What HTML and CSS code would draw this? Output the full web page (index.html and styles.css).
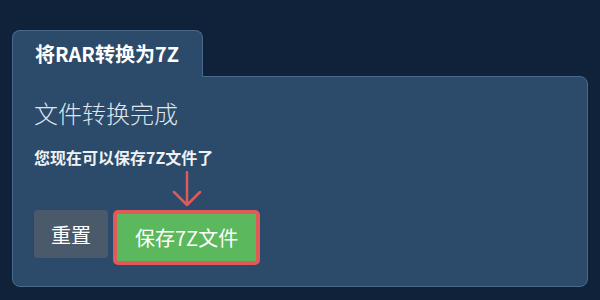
FILE: index.html
```html
<!DOCTYPE html>
<html lang="zh-CN">
<head>
  <meta charset="UTF-8" />
  <meta name="viewport" content="width=device-width, initial-scale=1.0"/>
  <title>将RAR转换为7Z</title>
  <link rel="stylesheet" href="styles.css">
</head>
<body>

  <div class="wrap">
    <!-- Tab header -->
    <div class="tab">将RAR转换为7Z</div>

    <!-- Panel body -->
    <div class="panel">
      <h2 class="title">文件转换完成</h2>
      <p class="note">您现在可以保存7Z文件了</p>

      <div class="buttons">
        <button class="btn btn-reset">重置</button>
        <button class="btn btn-save">
          保存7Z文件
          <svg class="arrow" width="32" height="36" viewBox="0 0 32 36">
            <path d="M16 1 V34 M3 21 L16 34 L29 21" fill="none" stroke="#e05a5a" stroke-width="2.5" stroke-linecap="round" stroke-linejoin="round"/>
          </svg>
        </button>
      </div>
    </div>
  </div>

</body>
</html>
```

FILE: styles.css
```css
body {
  margin: 0;
  height: 100vh;
  background: #0f2239;
  font-family: "Noto Sans CJK SC", "Noto Sans", sans-serif;
  color: #fff;
  overflow: hidden;
}

.wrap {
  padding: 30px 12px 0 12px;
}

.tab {
  display: inline-block;
  position: relative;
  z-index: 1;
  height: 46px;
  line-height: 46px;
  padding: 0 23px 0 22px;
  margin-bottom: -1px;
  background: #2c4a6a;
  border: 1px solid #4a6a8d;
  border-bottom: none;
  border-radius: 8px 8px 0 0;
  font-size: 20px;
  font-weight: bold;
}

.panel {
  background: #2c4a6a;
  border: 1px solid #4a6a8d;
  border-radius: 0 8px 8px 8px;
  padding: 0 21px 21px 21px;
}

.title {
  margin: 21px 0 0 0;
  font-size: 24px;
  line-height: 29px;
  font-weight: 300;
  color: #dfe6ec;
}

.note {
  margin: 19px 0 0 0;
  font-size: 16px;
  line-height: 22px;
  font-weight: bold;
  color: #eef2f5;
}

.buttons {
  display: flex;
  align-items: flex-start;
  gap: 5px;
  margin-top: 42px;
}

.btn {
  font-family: inherit;
  font-size: 20px;
  color: #fff;
  border: none;
  cursor: pointer;
  box-sizing: border-box;
}

.btn-reset {
  height: 48px;
  padding: 0 17px;
  background: #4b5a6b;
  border-radius: 4px;
}

.btn-save {
  position: relative;
  height: 55px;
  padding: 0 18px;
  background: #5cb85c;
  border: 4px solid #e05a5a;
  border-radius: 5px;
}

.arrow {
  position: absolute;
  left: 50%;
  bottom: calc(100% + 7px);
  transform: translateX(-50%);
}
```
